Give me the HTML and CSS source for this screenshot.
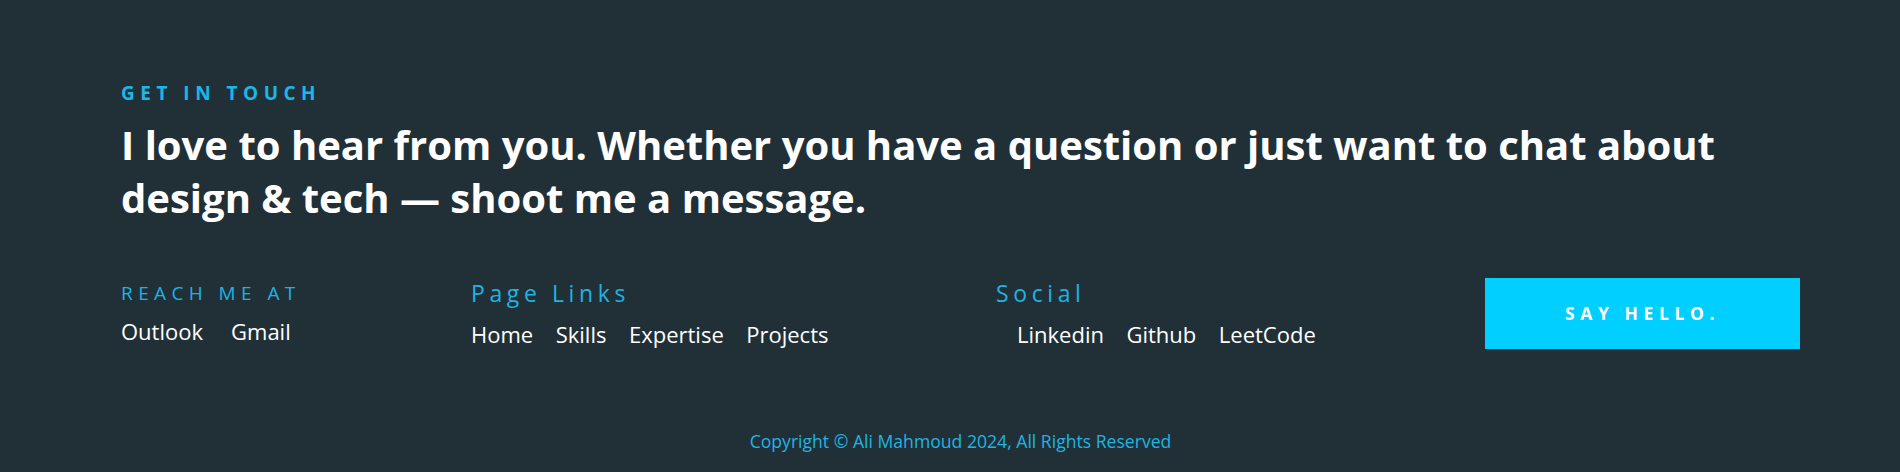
FILE: index.html
```html
<!DOCTYPE html>
<html lang="en">
<head>
<meta charset="utf-8">
<title>Contact</title>
<link rel="stylesheet" href="styles.css">
</head>
<body>
<footer class="contact">
  <p class="eyebrow">GET IN TOUCH</p>
  <h2 class="headline">I love to hear from you. Whether you have a question or just want to chat about design &amp; tech — shoot me a message.</h2>
  <div class="links-row">
    <div class="col">
      <h3 class="col-title caps">REACH ME AT</h3>
      <ul class="link-list mail">
        <li><a href="#">Outlook</a></li>
        <li><a href="#">Gmail</a></li>
      </ul>
    </div>
    <div class="col">
      <h3 class="col-title">Page Links</h3>
      <ul class="link-list">
        <li><a href="#">Home</a></li>
        <li><a href="#">Skills</a></li>
        <li><a href="#">Expertise</a></li>
        <li><a href="#">Projects</a></li>
      </ul>
    </div>
    <div class="col">
      <h3 class="col-title">Social</h3>
      <ul class="link-list social">
        <li><a href="#">Linkedin</a></li>
        <li><a href="#">Github</a></li>
        <li><a href="#">LeetCode</a></li>
      </ul>
    </div>
    <div class="col">
      <a class="btn" href="#">SAY HELLO.</a>
    </div>
  </div>
  <p class="copyright">Copyright © Ali Mahmoud 2024, All Rights Reserved</p>
</footer>
</body>
</html>
```

FILE: styles.css
```css
* { box-sizing: border-box; }

html, body {
  margin: 0;
  padding: 0;
  background: #213037;
}

body {
  font-family: "Open Sans", "Noto Sans", sans-serif;
  color: #ffffff;
}

.contact {
  padding: 82px 100px 19px 121px;
  min-height: 472px;
}

.eyebrow {
  margin: 0;
  font-size: 19px;
  line-height: 23px;
  font-weight: 700;
  letter-spacing: 5.5px;
  color: #1ab7e8;
}

.headline {
  margin: 13.3px 0 0;
  font-size: 40px;
  line-height: 53px;
  font-weight: 700;
  color: #ffffff;
}

.links-row {
  margin-top: 53.5px;
  display: grid;
  grid-template-columns: 350px 525px 489px 315px;
  align-items: start;
}

.col-title {
  margin: 0;
  font-size: 23px;
  line-height: 30px;
  font-weight: 400;
  letter-spacing: 4.6px;
  color: #1fb3e3;
}

.col-title.caps {
  font-size: 19px;
  letter-spacing: 5.4px;
}

.link-list {
  list-style: none;
  margin: 11px 0 0;
  padding: 0;
  display: flex;
  gap: 22.5px;
}

.link-list.mail {
  margin-top: 8.5px;
  gap: 28px;
}

.link-list.social {
  padding-left: 21px;
}

.link-list a {
  color: #ffffff;
  text-decoration: none;
  font-size: 22px;
  line-height: 30px;
}

.btn {
  display: flex;
  align-items: center;
  justify-content: center;
  height: 71px;
  background: #00cfff;
  color: #ffffff;
  text-decoration: none;
  font-size: 17.5px;
  font-weight: 700;
  letter-spacing: 5.6px;
}

.copyright {
  margin: 80px 0 0;
  text-align: center;
  font-size: 17.6px;
  line-height: 24px;
  color: #1fb5e2;
}
```
